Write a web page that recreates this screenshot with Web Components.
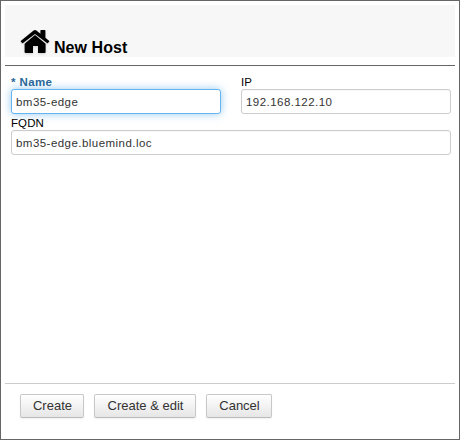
<!DOCTYPE html>
<html lang="en">
<head>
<meta charset="utf-8">
<title>New Host</title>
<style>
html, body { margin: 0; height: 100%; background: #fff; }
body { font-family: "Liberation Sans", Arial, sans-serif; color: #000; }
</style>
</head>
<body>
<host-dialog>
  <dialog-title slot="title">New Host</dialog-title>
  <form-field required active label="Name" value="bm35-edge"></form-field>
  <form-field label="IP" value="192.168.122.10"></form-field>
  <form-field wide label="FQDN" value="bm35-edge.bluemind.loc"></form-field>
  <push-button slot="actions" style="width:64px">Create</push-button>
  <push-button slot="actions" style="width:102px">Create &amp; edit</push-button>
  <push-button slot="actions" style="width:66px">Cancel</push-button>
</host-dialog>
<script>
class HostDialog extends HTMLElement {
  constructor() {
    super();
    this.attachShadow({ mode: 'open' }).innerHTML = `
      <style>
        :host { display: flex; flex-direction: column; box-sizing: border-box; width: 460px; height: 440px;
          border: 1px solid #666; padding: 4px; background: #fff; }
        header { height: 60px; border-bottom: 1px solid #666; }
        main { flex: 1; display: grid; grid-template-columns: 210px 210px; column-gap: 20px;
          align-content: start; padding: 10px 4px 0 6px; }
        footer { display: flex; gap: 10px; box-sizing: border-box; height: 52px;
          border-top: 1px solid #ccc; padding: 10px 15px 0; }
      </style>
      <header><slot name="title"></slot></header>
      <main><slot></slot></main>
      <footer><slot name="actions"></slot></footer>`;
  }
}
class DialogTitle extends HTMLElement {
  constructor() {
    super();
    this.attachShadow({ mode: 'open' }).innerHTML = `
      <style>
        :host { display: flex; align-items: flex-end; box-sizing: border-box; height: 52px; background: #f7f7f7;
          padding: 0 0 0 15px; font-weight: bold; font-size: 16px; line-height: 18px; letter-spacing: .05px; }
        svg { display: block; width: 30px; height: 26px; margin-right: 4px; margin-bottom: 2px;
          filter: drop-shadow(0 1px 1px rgba(0,0,0,.15)); }
      </style>
      <svg viewBox="0 0 30 26"><path d="M15 6 25.6 14.8V23q0 1-1 1H18V17H13V24H5.6q-1 0-1-1V14.8Z"/><path d="M13.6 1.6q1.4-1.1 2.8 0L20.4 4.7V1.7q0-.6.6-.6h3.8q.6 0 .6.6v7.1l3.6 3q.5.4.1.9l-1.2 1.4q-.4.4-.9 0L15 4.9 3 14.1q-.5.4-.9 0L.9 12.7q-.4-.5.1-.9Z"/></svg>
      <span><slot></slot></span>`;
  }
}
class FormField extends HTMLElement {
  connectedCallback() {
    if (this.shadowRoot) return;
    const root = this.attachShadow({ mode: 'open' });
    root.innerHTML = `
      <style>
        :host { display: block; height: 41px; }
        :host([wide]) { grid-column: 1 / -1; }
        label { display: block; height: 13px; line-height: 13px; font-size: 11.5px; letter-spacing: .1px; white-space: pre; }
        :host([required]) label { color: #286799; font-weight: bold; font-size: 11.5px; letter-spacing: .4px; }
        .box { box-sizing: border-box; height: 25px; border: 1px solid #ccc; border-radius: 3px;
          padding: 1px 4px 0; font-size: 11.5px; line-height: 23px; letter-spacing: .46px; color: #333; white-space: nowrap; background: #fff;
          box-shadow: inset 0 1px 1px rgba(0,0,0,.03); }
        :host([active]) .box { border-color: #66b3ee; box-shadow: 0 0 8px rgba(82,168,236,.6); }
      </style>
      <label></label><div class="box"></div>`;
    root.querySelector('label').textContent = (this.hasAttribute('required') ? '* ' : '') + this.getAttribute('label');
    root.querySelector('.box').textContent = this.getAttribute('value');
  }
}
class PushButton extends HTMLElement {
  constructor() {
    super();
    this.attachShadow({ mode: 'open' }).innerHTML = `
      <style>
        :host { display: block; box-sizing: border-box; height: 24px; border: 1px solid #c8c8c8; border-bottom-color: #bbb;
          border-radius: 2px; padding-left: 1px; text-align: center; font-size: 13px; line-height: 22px; color: #333; white-space: nowrap;
          background: linear-gradient(#fff, #e6e6e6); box-shadow: 0 1px 2px rgba(0,0,0,.06); }
      </style><slot></slot>`;
  }
}
customElements.define('host-dialog', HostDialog);
customElements.define('dialog-title', DialogTitle);
customElements.define('form-field', FormField);
customElements.define('push-button', PushButton);
</script>
</body>
</html>
